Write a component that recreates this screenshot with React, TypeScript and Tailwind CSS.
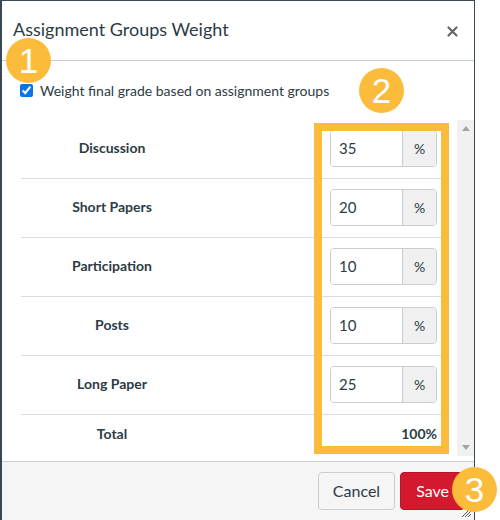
import React from 'react';

const rows = [
  { name: 'Discussion', value: '35' },
  { name: 'Short Papers', value: '20' },
  { name: 'Participation', value: '10' },
  { name: 'Posts', value: '10' },
  { name: 'Long Paper', value: '25' },
];

const Badge: React.FC<{ n: string; className: string }> = ({ n, className }) => (
  <div
    className={`absolute w-[45px] h-[45px] rounded-full bg-[#fcbc3b] text-white flex items-center justify-center text-[35px] leading-none ${className}`}
    style={{ fontFamily: '"Liberation Sans", Arial, sans-serif' }}
  >
    {n}
  </div>
);

const WeightRow: React.FC<{ name: string; value: string }> = ({ name, value }) => (
  <div className="h-[59px] flex items-center border-b border-[#d7dde1]">
    <div className="w-[182px] text-center font-bold text-[14px] text-[#2d3b45] -mt-[4px]">{name}</div>
    <div className="flex-1 flex justify-end pr-[10px] -mt-[1px]">
      <div className="flex h-[37px] w-[107px] rounded-[4px] border border-[#c7cdd1] overflow-hidden">
        <div className="flex-1 flex items-center pl-[8px] text-[15px] text-[#2d3b45] bg-white">{value}</div>
        <div className="w-[34px] flex items-center justify-center border-l border-[#c7cdd1] bg-[#f0f0f0] text-[14px] text-[#2d3b45]">
          %
        </div>
      </div>
    </div>
  </div>
);

export default function App() {
  return (
    <div className="relative w-[500px] h-[520px] bg-white overflow-hidden" style={{ fontFamily: 'Lato, "Noto Sans", sans-serif' }}>
      <div className="w-[475px] h-[520px] border-l-2 border-t border-r border-[#3a4853] bg-white flex flex-col">
        {/* header */}
        <div className="h-[60px] shrink-0 flex items-center justify-between border-b border-[#c7cdd1] pl-[11px] pr-[16px]">
          <h2 className="text-[18px] text-[#2d3b45] -mt-[3px]">Assignment Groups Weight</h2>
          <svg width="11" height="11" viewBox="0 0 11 11" className="mt-[2px]">
            <path d="M1.5 1.5L9.5 9.5M9.5 1.5L1.5 9.5" stroke="#666" strokeWidth="2.2" strokeLinecap="round" />
          </svg>
        </div>

        {/* checkbox */}
        <div className="h-[59px] shrink-0 flex items-center pl-[18px]">
          <input type="checkbox" checked readOnly className="w-[13px] h-[13px] m-0 accent-[#0b74e5]" />
          <span className="ml-[7px] text-[14px] text-[#2d3b45]">Weight final grade based on assignment groups</span>
        </div>

        {/* table + scrollbar */}
        <div className="h-[336px] shrink-0 flex pl-[19px]">
          <div className="w-[426px] overflow-hidden">
            {rows.map((r) => (
              <WeightRow key={r.name} name={r.name} value={r.value} />
            ))}
            <div className="h-[40px] flex items-center -mt-[2px]">
              <div className="w-[182px] text-center font-bold text-[14px] text-[#2d3b45]">Total</div>
              <div className="flex-1 text-right pr-[10px] font-bold text-[14px] text-[#2d3b45]">100%</div>
            </div>
          </div>
          <div className="ml-[10px] w-[17px] bg-[#f1f1f1] flex flex-col items-center justify-between py-[6px]">
            <svg width="8" height="5" viewBox="0 0 8 5">
              <path d="M0 5L4 0L8 5Z" fill="#a3a3a3" />
            </svg>
            <svg width="8" height="5" viewBox="0 0 8 5">
              <path d="M0 0L4 5L8 0Z" fill="#a3a3a3" />
            </svg>
          </div>
        </div>

        {/* footer */}
        <div className="mt-[5px] flex-1 border-t border-[#c7cdd1] bg-[#f5f5f5] flex justify-end items-start pt-[10px] pr-[9px] relative">
          <button className="h-[38px] px-[14px] rounded-[4px] border border-[#c7cdd1] bg-[#f5f5f5] text-[16px] text-[#2d3b45]">
            Cancel
          </button>
          <button className="ml-[5px] h-[38px] px-[15px] rounded-[4px] border border-[#b8152a] bg-[#d3192d] text-[16px] text-white">
            Save
          </button>
          <svg width="11" height="11" viewBox="0 0 11 11" className="absolute right-[2px] bottom-[2px]">
            <path d="M1 10L10 1M4 10L10 4M7 10L10 7" stroke="#555" strokeWidth="1" />
          </svg>
        </div>
      </div>

      {/* annotation overlays */}
      <div className="absolute left-[314px] top-[123px] w-[135px] h-[331px] border-[8px] border-[#fcbc3b]" />
      <Badge n="1" className="left-[6px] top-[38px]" />
      <Badge n="2" className="left-[359px] top-[68px]" />
      <Badge n="3" className="left-[452px] top-[467px]" />
    </div>
  );
}
